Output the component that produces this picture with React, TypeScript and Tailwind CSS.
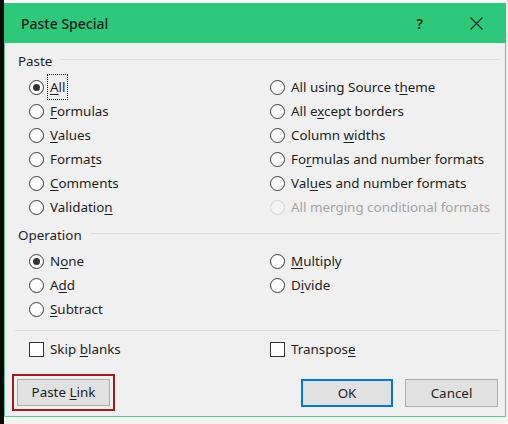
import React from 'react';

function Key({ text, k }: { text: string; k: number }) {
  return (
    <>
      {text.slice(0, k)}
      <span className="underline underline-offset-[2px] decoration-[1px]">{text[k]}</span>
      {text.slice(k + 1)}
    </>
  );
}

type Opt = { label: string; k: number; checked?: boolean; disabled?: boolean; focus?: boolean };

function Radio({ label, k, checked, disabled, focus }: Opt) {
  return (
    <div className="flex items-center h-[24px] gap-[6px]">
      <span
        className={
          'w-[15px] h-[15px] rounded-full border-[1.5px] flex items-center justify-center shrink-0 ' +
          (disabled ? 'border-[#d2d2d2] bg-[#f4f4f4]' : 'border-[#3a3a3a] bg-white')
        }
      >
        {checked && <span className="w-[7px] h-[7px] rounded-full bg-[#333]" />}
      </span>
      <span
        className={
          (disabled ? 'text-[#a3a3a3] ' : 'text-[#1e1e1e] ') +
          (focus ? 'outline outline-1 outline-dotted outline-[#222] px-[2px] py-[2px] -ml-[2px]' : '')
        }
      >
        {disabled ? label : <Key text={label} k={k} />}
      </span>
    </div>
  );
}

function Check({ label, k }: { label: string; k: number }) {
  return (
    <div className="flex items-center h-[24px] gap-[6px]">
      <span className="w-[15px] h-[15px] border border-[#333] bg-white shrink-0" />
      <span className="text-[#1e1e1e]">
        <Key text={label} k={k} />
      </span>
    </div>
  );
}

function GroupHead({ title }: { title: string }) {
  return (
    <div className="flex items-center h-[18px] pl-[13px] pr-[5px]">
      <span className="text-[#1e1e1e]">{title}</span>
      <span className="flex-1 h-px bg-[#dcdcdc] ml-[8px] mb-[3px]" />
    </div>
  );
}

const pasteOpts: Opt[] = [
  { label: 'All', k: 0, checked: true, focus: true },
  { label: 'All using Source theme', k: 18 },
  { label: 'Formulas', k: 0 },
  { label: 'All except borders', k: 5 },
  { label: 'Values', k: 0 },
  { label: 'Column widths', k: 7 },
  { label: 'Formats', k: 5 },
  { label: 'Formulas and number formats', k: 2 },
  { label: 'Comments', k: 0 },
  { label: 'Values and number formats', k: 3 },
  { label: 'Validation', k: 9 },
  { label: 'All merging conditional formats', k: 0, disabled: true },
];

const opOpts: Opt[] = [
  { label: 'None', k: 1, checked: true },
  { label: 'Multiply', k: 0 },
  { label: 'Add', k: 1 },
  { label: 'Divide', k: 1 },
  { label: 'Subtract', k: 0 },
];

export default function App() {
  return (
    <div className="w-[508px] h-[424px] bg-[#f3f3f3] flex overflow-hidden font-['Noto_Sans',sans-serif] text-[13.4px]">
      <div className="w-[4px] bg-[#0a0a0a]" />
      <div className="flex flex-col">
        <div className="h-[3px] bg-[#fafafa]" />
        <div className="w-[502px] flex flex-col">
          {/* Title bar */}
          <div className="h-[40px] bg-[#2ec87a] flex items-center pl-[17px] pr-[23px]">
            <span className="text-[14px] font-medium text-[#1a1a1a]">Paste Special</span>
            <span className="ml-auto text-[14px] font-semibold text-[#1f1f1f]">?</span>
            <svg className="ml-[47px]" width="13" height="13" viewBox="0 0 13 13">
              <path d="M0.5 0.5 L12.5 12.5 M12.5 0.5 L0.5 12.5" stroke="#1f2a22" strokeWidth="1.2" />
            </svg>
          </div>

          {/* Body */}
          <div className="h-[374px] bg-[#f0f0f0] border-x border-b border-[#5dc896] pt-[9px] flex flex-col">
            <GroupHead title="Paste" />
            <div className="grid grid-cols-[241px_1fr] pl-[24px] mt-[5px]">
              {pasteOpts.map((o) => (
                <Radio key={o.label} {...o} />
              ))}
            </div>

            <div className="mt-[7px]">
              <GroupHead title="Operation" />
            </div>
            <div className="grid grid-cols-[241px_1fr] pl-[24px] mt-[5px]">
              {opOpts.map((o) => (
                <Radio key={o.label} {...o} />
              ))}
            </div>

            <div className="h-px bg-[#dcdcdc] ml-[10px] mr-[5px] mt-[9px]" />

            <div className="grid grid-cols-[241px_1fr] pl-[24px] mt-[6px]">
              <Check label="Skip blanks" k={5} />
              <Check label="Transpose" k={8} />
            </div>

            {/* Buttons */}
            <div className="flex items-start mt-[13px] pl-[7px] pr-[7px]">
              <div className="border-2 border-[#9e1b20] p-[3px]">
                <button className="w-[93px] h-[27px] bg-[#e1e1e1] border border-[#adadad] text-[#1e1e1e]">
                  Paste <Key text="Link" k={0} />
                </button>
              </div>
              <button className="ml-auto mt-[5px] w-[92px] h-[28px] bg-[#e1e1e1] border-2 border-[#0078d7] text-[#1e1e1e]">
                OK
              </button>
              <button className="ml-[12px] mt-[5px] w-[93px] h-[28px] bg-[#e1e1e1] border border-[#adadad] text-[#1e1e1e]">
                Cancel
              </button>
            </div>
          </div>
        </div>
      </div>
    </div>
  );
}
